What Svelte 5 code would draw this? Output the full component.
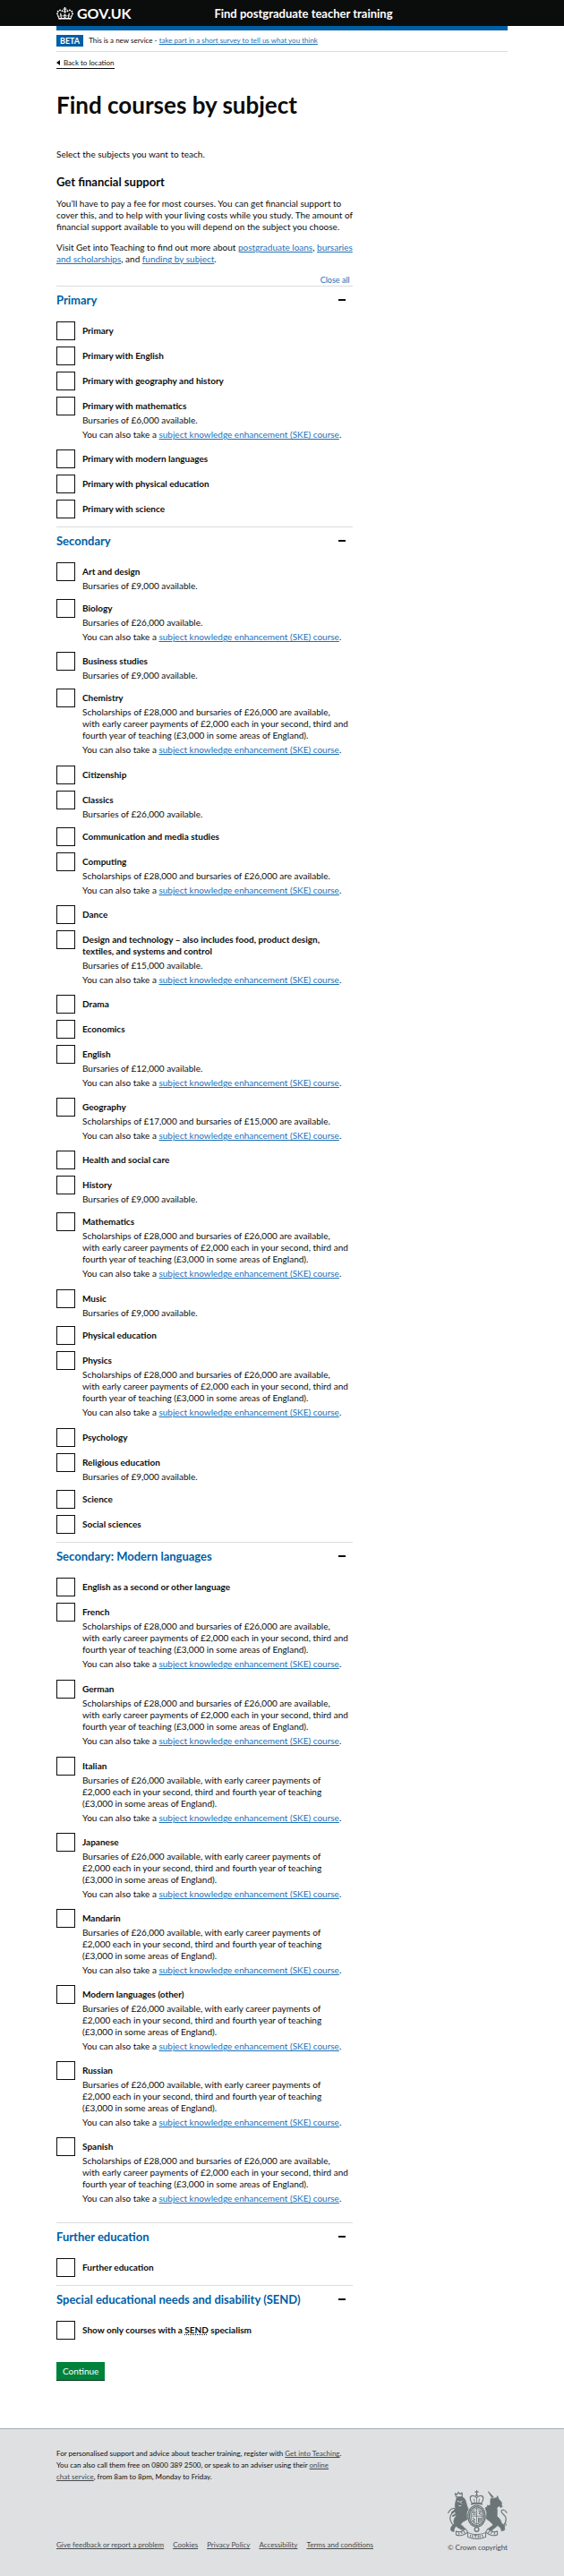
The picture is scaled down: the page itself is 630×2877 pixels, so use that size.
<script>
  const bursary = (amount) => `Bursaries of £${amount} available.`;
  const scholarship = (a, b) => `Scholarships of £${a} and bursaries of £${b} are available.`;
  const fullPackage =
    'Scholarships of £28,000 and bursaries of £26,000 are available, with early career payments of £2,000 each in your second, third and fourth year of teaching (£3,000 in some areas of England).';
  const bursaryPackage =
    'Bursaries of £26,000 available, with early career payments of £2,000 each in your second, third and fourth year of teaching (£3,000 in some areas of England).';

  let groups = $state([
    {
      title: 'Primary',
      open: true,
      subjects: [
        { name: 'Primary' },
        { name: 'Primary with English' },
        { name: 'Primary with geography and history' },
        { name: 'Primary with mathematics', hint: bursary('6,000'), ske: true },
        { name: 'Primary with modern languages' },
        { name: 'Primary with physical education' },
        { name: 'Primary with science' }
      ]
    },
    {
      title: 'Secondary',
      open: true,
      subjects: [
        { name: 'Art and design', hint: bursary('9,000') },
        { name: 'Biology', hint: bursary('26,000'), ske: true },
        { name: 'Business studies', hint: bursary('9,000') },
        { name: 'Chemistry', hint: fullPackage, ske: true },
        { name: 'Citizenship' },
        { name: 'Classics', hint: bursary('26,000') },
        { name: 'Communication and media studies' },
        { name: 'Computing', hint: scholarship('28,000', '26,000'), ske: true },
        { name: 'Dance' },
        {
          name: 'Design and technology – also includes food, product design, textiles, and systems and control',
          hint: bursary('15,000'),
          ske: true
        },
        { name: 'Drama' },
        { name: 'Economics' },
        { name: 'English', hint: bursary('12,000'), ske: true },
        { name: 'Geography', hint: scholarship('17,000', '15,000'), ske: true },
        { name: 'Health and social care' },
        { name: 'History', hint: bursary('9,000') },
        { name: 'Mathematics', hint: fullPackage, ske: true },
        { name: 'Music', hint: bursary('9,000') },
        { name: 'Physical education' },
        { name: 'Physics', hint: fullPackage, ske: true },
        { name: 'Psychology' },
        { name: 'Religious education', hint: bursary('9,000') },
        { name: 'Science' },
        { name: 'Social sciences' }
      ]
    },
    {
      title: 'Secondary: Modern languages',
      open: true,
      subjects: [
        { name: 'English as a second or other language' },
        { name: 'French', hint: fullPackage, ske: true },
        { name: 'German', hint: fullPackage, ske: true },
        { name: 'Italian', hint: bursaryPackage, ske: true },
        { name: 'Japanese', hint: bursaryPackage, ske: true },
        { name: 'Mandarin', hint: bursaryPackage, ske: true },
        { name: 'Modern languages (other)', hint: bursaryPackage, ske: true },
        { name: 'Russian', hint: bursaryPackage, ske: true },
        { name: 'Spanish', hint: fullPackage, ske: true }
      ]
    },
    { title: 'Further education', open: true, subjects: [{ name: 'Further education' }] },
    {
      title: 'Special educational needs and disability (SEND)',
      open: true,
      subjects: [{ name: 'Show only courses with a SEND specialism', send: true }]
    }
  ]);

  const allOpen = $derived(groups.every((g) => g.open));

  function toggleAll() {
    const next = !allOpen;
    for (const g of groups) g.open = next;
  }
</script>

<header class="masthead">
  <div class="container masthead-row">
    <a class="logo" href="#home" aria-label="GOV.UK">
      <svg class="crown" viewBox="0 0 132 97" aria-hidden="true">
        <path fill="currentColor" fill-rule="evenodd" d="M25 30.2c3.5 1.5 7.7-.2 9.1-3.7 1.5-3.6-.2-7.8-3.9-9.2-3.6-1.4-7.6.3-9.1 3.9-1.4 3.5.3 7.5 3.9 9zM9 39.5c3.6 1.5 7.8-.2 9.2-3.7 1.5-3.6-.2-7.8-3.9-9.1-3.6-1.5-7.6.2-9.1 3.8-1.4 3.5.3 7.5 3.8 9zM4.4 57.2c3.5 1.5 7.7-.2 9.1-3.8 1.5-3.6-.2-7.7-3.9-9.1-3.5-1.5-7.6.3-9.1 3.8-1.4 3.5.3 7.6 3.9 9.1zm38.3-21.4c3.5 1.5 7.7-.2 9.1-3.8 1.5-3.6-.2-7.7-3.9-9.1-3.6-1.5-7.6.3-9.1 3.8-1.3 3.6.4 7.7 3.9 9.1zm64.4-5.6c-3.6 1.5-7.8-.2-9.1-3.7-1.5-3.6.2-7.8 3.8-9.2 3.6-1.4 7.7.3 9.2 3.9 1.3 3.5-.4 7.5-3.9 9zm15.9 9.3c-3.6 1.5-7.7-.2-9.1-3.7-1.5-3.6.2-7.8 3.7-9.1 3.6-1.5 7.7.2 9.2 3.8 1.5 3.5-.3 7.5-3.8 9zm4.7 17.7c-3.6 1.5-7.8-.2-9.2-3.8-1.5-3.6.2-7.7 3.9-9.1 3.6-1.5 7.7.3 9.2 3.8 1.3 3.5-.4 7.6-3.9 9.1zM89.3 35.8c-3.6 1.5-7.8-.2-9.2-3.8-1.4-3.6.2-7.7 3.9-9.1 3.6-1.5 7.7.3 9.2 3.8 1.4 3.6-.3 7.7-3.9 9.1zM69.7 17.7l8.9 4.7V9.3l-8.9 2.8c-.2-.3-.5-.6-.9-.9L72.4 0H59.6l3.5 11.2c-.3.3-.6.5-.9.9l-8.8-2.8v13.1l8.8-4.7c.3.3.6.7.9.9l-5 15.4v.1c-.2.8-.4 1.6-.4 2.4 0 4.1 3.1 7.5 7 8.1h.2c.3 0 .7.1 1 .1.4 0 .7 0 1-.1h.2c4-.6 7.1-4.1 7.1-8.1 0-.8-.1-1.7-.4-2.4V34l-5.1-15.4c.4-.2.7-.6 1-.9zM66 92.8c16.9 0 32.8 1.1 47.1 3.2 4-16.9 8.9-26.7 14-33.5l-9.6-3.4c1 4.9 1.1 7.2 0 10.2-1.5-1.4-3-4.3-4.2-8.7L108.6 76c2.8-2 5-3.2 7.5-3.3-4.4 9.4-10 11.9-13.6 11.2-4.3-.8-6.3-4.6-5.6-7.9 1-4.7 5.7-5.9 8-.5 4.3-8.7-3-11.4-7.6-8.8 7.1-7.2 7.9-13.5 2.1-21.1-8 6.1-8.1 12.3-4.5 20.8-4.7-5.4-12.1-2.5-9.5 6.2 3.4-5.2 7.9-2 7.2 3.1-.6 4.3-6.4 7.8-13.5 7.2-10.3-.9-10.9-8-11.2-13.8 2.5-.5 7.1 1.8 11 7.3L80.2 60c-4.1 4.4-8 5.3-12.3 5.4 1.4-4.4 8-11.6 8-11.6H55.5s6.4 7.2 7.9 11.6c-4.2-.1-8-1-12.3-5.4l1.4 16.4c3.9-5.5 8.5-7.7 10.9-7.3-.3 5.8-.9 12.8-11.1 13.8-7.2.6-12.9-2.9-13.5-7.2-.7-5 3.8-8.3 7.1-3.1 2.7-8.7-4.6-11.6-9.4-6.2 3.7-8.5 3.6-14.7-4.6-20.8-5.8 7.6-5 13.9 2.2 21.1-4.7-2.6-11.9.1-7.7 8.8 2.3-5.5 7.1-4.2 8.1.5.7 3.3-1.3 7.1-5.7 7.9-3.5.7-9-1.8-13.5-11.2 2.5.1 4.7 1.3 7.5 3.3l-4.7-15.4c-1.2 4.4-2.7 7.2-4.3 8.7-1.1-3-.9-5.3 0-10.2l-9.5 3.4c5 6.9 9.9 16.7 14 33.5 14.8-2.1 30.8-3.2 47.7-3.2z" />
      </svg>
      <span>GOV.UK</span>
    </a>
    <a class="service" href="#service">Find postgraduate teacher training</a>
  </div>
</header>

<div class="container">
  <div class="blue-bar"></div>
  <div class="phase">
    <strong class="tag">BETA</strong>
    <span>This is a new service - <a href="#survey">take part in a short survey to tell us what you think</a></span>
  </div>
  <a class="back" href="#location">
    <svg viewBox="0 0 4 6" aria-hidden="true"><path d="M4 0v6L0 3z" fill="currentColor" /></svg>
    Back to location
  </a>

  <main class="grid">
    <div class="column">
      <h1>Find courses by subject</h1>
      <div class="intro">
        <p>Select the subjects you want to teach.</p>
        <h2>Get financial support</h2>
        <p>
          You’ll have to pay a fee for most courses. You can get financial support to cover this, and to help
          with your living costs while you study. The amount of financial support available to you will depend on
          the subject you choose.
        </p>
        <p>
          Visit Get into Teaching to find out more about <a href="#loans">postgraduate loans</a>,
          <a href="#bursaries">bursaries and scholarships</a>, and <a href="#funding">funding by subject</a>.
        </p>
      </div>

      <form onsubmit={(e) => e.preventDefault()}>
        <div class="controls">
          <button type="button" class="toggle-all" onclick={toggleAll}>{allOpen ? 'Close all' : 'Open all'}</button>
        </div>
        {#each groups as group, g}
          <section>
            <h2 class="section-title">
              <button type="button" aria-expanded={group.open} onclick={() => (group.open = !group.open)}>
                <span>{group.title}</span>
                <span class="mark" class:plus={!group.open}></span>
              </button>
            </h2>
            {#if group.open}
              <ul>
                {#each group.subjects as subject, i}
                  <li
                    class:has-hint={subject.hint}
                    class:has-ske={subject.ske}
                    class:has-package={subject.hint === fullPackage}
                  >
                    <input type="checkbox" id="subject-{g}-{i}" />
                    <div class="text">
                      <label for="subject-{g}-{i}">
                        {#if subject.send}Show only courses with a <abbr>SEND</abbr> specialism{:else}{subject.name}{/if}
                      </label>
                      {#if subject.hint}<p>{subject.hint}</p>{/if}
                      {#if subject.ske}
                        <p>You can also take a <a href="#ske">subject knowledge enhancement (SKE) course</a>.</p>
                      {/if}
                    </div>
                  </li>
                {/each}
              </ul>
            {/if}
          </section>
        {/each}
        <button class="continue">Continue</button>
      </form>
    </div>
  </main>
</div>

<footer>
  <div class="container">
    <p class="support">
      For personalised support and advice about teacher training, register with <a href="#git">Get into Teaching</a>.
      You can also call them free on 0800 389 2500, or speak to an adviser using their
      <a href="#chat">online <span class="keep">chat service</span></a>, from 8am to 8pm, Monday to Friday.
    </p>
    <div class="footer-row">
      <nav>
        <a href="#feedback">Give feedback or report a problem</a>
        <a href="#cookies">Cookies</a>
        <a href="#privacy">Privacy Policy</a>
        <a href="#accessibility">Accessibility</a>
        <a href="#terms">Terms and conditions</a>
      </nav>
      <a class="copyright" href="#copyright">
        <svg viewBox="0 0 200 164" aria-hidden="true" fill="none" stroke="#6b7578" stroke-linecap="round" stroke-linejoin="round">
          <!-- crown -->
          <g stroke-width="3.5">
            <path d="M97 2v12M92 6h10" />
            <path d="M82 44c-9-12-9-24 0-25 7-1 12 2 15 7 3-5 8-8 15-7 9 1 9 13 0 25z" />
            <path d="M97 26v16M88 30l2 11M106 30l-2 11" stroke-width="2.5" />
            <path d="M80 47c11-3 23-3 34 0" stroke-width="5" />
            <circle cx="97" cy="17" r="2" />
          </g>
          <!-- garter and shield -->
          <ellipse cx="97" cy="87" rx="29" ry="36" stroke-width="4" />
          <ellipse cx="97" cy="87" rx="24" ry="31" stroke-width="5" stroke-dasharray="3 5" />
          <ellipse cx="97" cy="87" rx="19" ry="26" stroke-width="2.5" />
          <path d="M97 62v50M79 87h36" stroke-width="2.5" />
          <path d="M84 71h9M83 76h10M84 81h9M103 69l7 4-6 5 7 4M84 94l7 4-6 5 6 4M103 93v14M107 93v12M111 93v8" stroke-width="3" />
          <circle cx="97" cy="131" r="7" stroke-width="4" />
          <!-- lion -->
          <path fill="#6b7578" stroke-width="2" d="M30 27c6-5 19-5 26 1 5 6 6 17 9 26l4 10c-6 8-7 21-3 33l-9 6c-8 3-12 8-13 13 7 3 12 8 13 15l-11 1c-5-4-14-6-18-12-6 7-7 12-7 19l-9-3c-5-8 1-17 10-23-5-13 3-22 9-31-7-5-8-14-5-22-3-10 0-19 4-33z" />
          <path d="M29 23l-4-12 7 4 4-8 6 7 6-5 1 14z" stroke-width="3.5" />
          <path d="M33 37l7 2M48 36l-6 4 5 5M38 52l6 1" stroke="#dee0e2" stroke-width="2.5" />
          <path d="M28 66l-13 9M31 79l-13 7" stroke-width="6" />
          <path d="M20 118c-10-9-14-23-10-33 3-10 14-12 15-19 0-8-11-6-18 2l-5 8" stroke-width="3.5" />
          <!-- unicorn -->
          <path fill="#6b7578" stroke-width="2" d="M152 30c8-7 17-3 21 4 7 8 6 18 6 25l-8-6-7 7c3 10 0 20 1 28 9 7 13 13 14 21 8 7 13 14 11 24l-10 4c-1-9-6-15-14-19-5 8-12 9-19 17l-11-4c4-9 12-10 16-15-6-7-10-13-19-17l-5-6c4-11 3-23-3-33 5-6 14-6 20-8-3-7-3-15-1-24z" />
          <path d="M151 29L136 6l17 18M164 28l2-8 4 10" stroke-width="3" />
          <path d="M146 47l-6 7-6-2M151 70l-13-6-8 4" stroke-width="5" />
          <path d="M174 34l7 10M177 45l5 10" stroke-width="3" />
          <path d="M184 122c10-10 12-23 9-33-4-8-14-11-14-18 1-8 12-6 18 4" stroke-width="3.5" />
          <path d="M145 95c12 0 19 17 32 23 11 6 21 2 18-5-5-6-14 3-7 10" stroke-width="2.5" />
          <!-- motto ribbons -->
          <g stroke-width="3">
            <path d="M28 137c10 4 23 2 31-9l8 12c-12 12-28 14-39 9zM166 137c-10 4-23 2-31-9l-8 12c12 12 28 14 39 9z" />
            <path d="M67 142c19 8 41 8 60 0v15c-19 7-41 7-60 0z" />
            <path d="M38 142v5M46 140l2 5M54 137l3 6M139 137l-3 6M147 140l-2 5M156 142v5M76 150v5M83 150v7M90 151h6M93 151v7M102 151v7M108 151v6M115 150l3 6" stroke-width="3" />
          </g>
        </svg>
        <span>© Crown copyright</span>
      </a>
    </div>
  </div>
</footer>

<style>
  :global(body) {
    margin: 0;
    background: #dee0e2;
    font-family: Lato, Roboto, sans-serif;
    font-size: 10px;
    line-height: 13px;
    color: #0b0c0c;
  }
  :global(#app) {
    background: #fff;
  }
  a {
    color: #1d70b8;
  }
  h1, h2, p, ul {
    margin: 0;
    padding: 0;
  }
  button {
    font: inherit;
    border: 0;
    padding: 0;
    background: none;
    cursor: pointer;
  }
  .container {
    padding: 0 10%;
  }

  .masthead {
    background: #0b0c0c;
  }
  .masthead-row {
    display: grid;
    grid-template-columns: 35% 1fr;
    align-items: center;
    height: 29px;
  }
  .masthead a {
    color: #fff;
    text-decoration: none;
    font-weight: 700;
  }
  .logo {
    display: flex;
    align-items: center;
    gap: 4px;
    font-size: 16px;
    line-height: 20px;
  }
  .crown {
    width: 19px;
    height: 14px;
  }
  .service {
    font-size: 13px;
    line-height: 16px;
  }

  .blue-bar {
    height: 5px;
    background: #005ea5;
  }
  .phase {
    display: flex;
    align-items: center;
    gap: 6px;
    padding: 5px 0;
    border-bottom: 1px solid #dadcdd;
    font-size: 8px;
  }
  .tag {
    padding: 0 4px;
    background: #005ea5;
    color: #fff;
    font-size: 9px;
    line-height: 13px;
  }
  .back {
    display: inline-flex;
    align-items: center;
    gap: 4px;
    margin-top: 6px;
    border-bottom: 1px solid #0b0c0c;
    color: #0b0c0c;
    font-size: 8px;
    line-height: 12px;
    text-decoration: none;
  }
  .back svg {
    width: 4px;
    height: 6px;
  }

  .grid {
    display: grid;
    grid-template-columns: 2fr 1fr;
    gap: 8px;
  }
  h1 {
    margin: 26px 0 35px;
    font-size: 26px;
    line-height: 28px;
  }
  .intro {
    margin-right: -8px;
  }
  .intro p {
    margin-bottom: 10px;
  }
  .intro h2 {
    margin: 16px 0 10px;
    font-size: 13px;
    line-height: 16px;
  }

  .controls {
    display: flex;
    justify-content: flex-end;
    padding: 0 3px 0 0;
  }
  .toggle-all {
    color: #1d70b8;
    font-size: 9px;
    line-height: 13px;
  }
  section {
    border-top: 1px solid #dadcdd;
    padding-bottom: 2px;
  }
  section:nth-of-type(3) {
    padding-bottom: 9px;
  }
  .section-title {
    font-size: 13px;
    line-height: 16px;
  }
  .section-title button {
    display: flex;
    justify-content: space-between;
    align-items: center;
    width: 100%;
    padding: 7px 8px 7px 0;
    color: #005ea5;
    text-align: left;
  }
  .mark {
    width: 8px;
    height: 2px;
    background: #0b0c0c;
  }
  .mark.plus {
    height: 8px;
    clip-path: polygon(38% 0, 62% 0, 62% 38%, 100% 38%, 100% 62%, 62% 62%, 62% 100%, 38% 100%, 38% 62%, 0 62%, 0 38%, 38% 38%);
  }
  ul {
    padding-top: 9px;
    list-style: none;
  }
  li {
    display: grid;
    grid-template-columns: 21px 1fr;
    gap: 8px;
    padding-bottom: 7px;
  }
  li.has-ske {
    padding-bottom: 9px;
  }
  li.has-package {
    padding-bottom: 10px;
  }
  input {
    appearance: none;
    width: 21px;
    height: 21px;
    margin: 0;
    border: 1px solid #0b0c0c;
    background: #fff;
  }
  input:checked {
    box-shadow: inset 0 0 0 5px #fff;
    background: #0b0c0c;
  }
  .text {
    padding: 4px 4px 0 0;
  }
  .text p {
    margin-top: 3px;
  }
  .has-hint .text {
    padding-bottom: 1px;
  }
  label {
    display: block;
    font-weight: 700;
  }
  abbr {
    text-decoration: underline dotted;
  }
  .continue {
    margin: 16px 0 54px;
    padding: 4px 7px;
    background: #00823b;
    box-shadow: 0 1px 0 #003618;
    color: #fff;
    line-height: 12px;
  }

  footer {
    border-top: 1px solid #a1acb2;
    background: #dee0e2;
    padding: 21px 0 25px;
    font-size: 8px;
  }
  footer a {
    color: #454a4d;
  }
  .support {
    width: 66%;
  }
  .keep {
    white-space: nowrap;
  }
  .footer-row {
    display: flex;
    justify-content: space-between;
    align-items: flex-end;
    padding-top: 8px;
  }
  nav {
    display: flex;
    flex-wrap: wrap;
    gap: 10px;
    padding-bottom: 3px;
  }
  .copyright {
    display: flex;
    flex-direction: column;
    align-items: center;
    gap: 3px;
    text-decoration: none;
  }
  .copyright svg {
    width: 67px;
    height: 55px;
  }
</style>
